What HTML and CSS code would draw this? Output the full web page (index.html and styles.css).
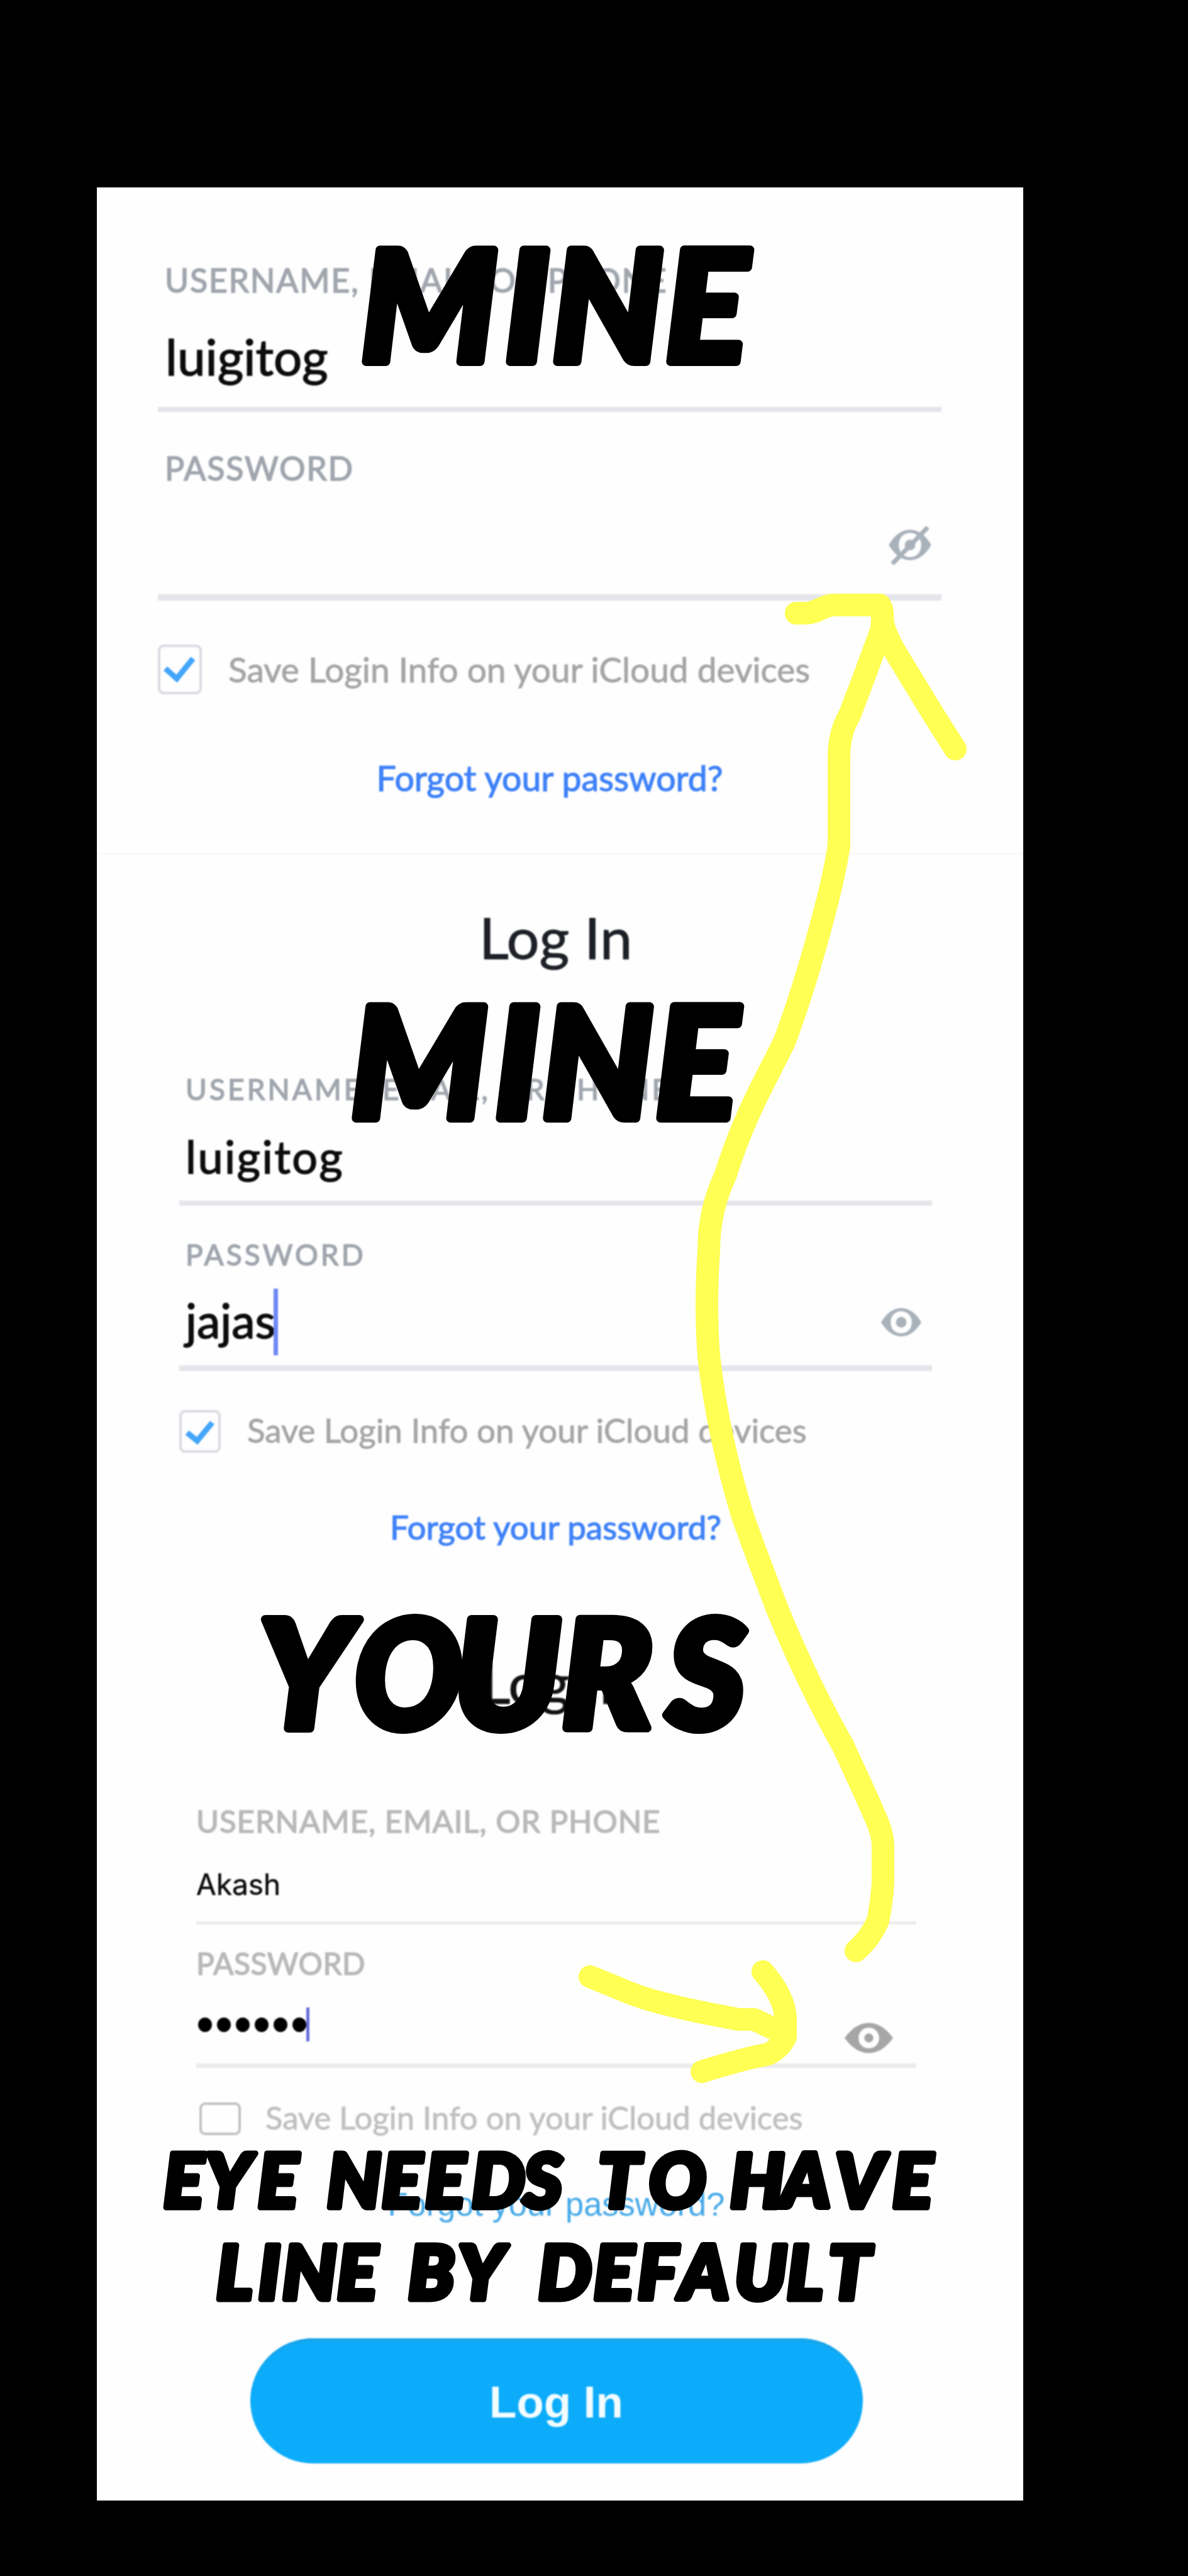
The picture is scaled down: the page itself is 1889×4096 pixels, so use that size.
FILE: index.html
```html
<!DOCTYPE html>
<html lang="en">
<head>
<meta charset="utf-8">
<title>Log In review</title>
<link rel="stylesheet" href="styles.css">
</head>
<body>
<main class="board">
  <div class="card">
    <section class="form form-hidden">
      <div class="field field-user">
        <div class="label">USERNAME, EMAIL, OR PHONE</div>
        <div class="value">luigitog</div>
      </div>
      <div class="field field-pass">
        <div class="label">PASSWORD</div>
        <div class="value value-empty">
          <svg class="eye" viewBox="0 0 85 78"><path fill-rule="evenodd" d="M0 38.500Q18 8 42.500 8T85 38.500Q67 69 42.500 69T0 38.500ZM42.500 14C29 14 20 25 20 38.500S29 63 42.500 63 65 52 65 38.500 56 14 42.500 14Z"/><circle cx="42.500" cy="38.500" r="10.500"/><path class="slash" d="M7 76 78 3"/></svg>
        </div>
      </div>
      <div class="save">
        <span class="box"><svg viewBox="0 0 70 79"><path d="M12 38 30 54 56 22"/></svg></span>
        <span class="save-text">Save Login Info on your iCloud devices</span>
      </div>
      <a class="forgot">Forgot your password?</a>
    </section>

    <section class="form form-visible">
      <h1 class="title">Log In</h1>
      <div class="field field-user">
        <div class="label">USERNAME, EMAIL, OR PHONE</div>
        <div class="value">luigitog</div>
      </div>
      <div class="field field-pass">
        <div class="label">PASSWORD</div>
        <div class="value"><span class="typed">jajas</span><i class="caret"></i>
          <svg class="eye" viewBox="0 0 80 56"><path fill-rule="evenodd" d="M0 28Q17 0 40 0T80 28Q63 56 40 56T0 28ZM40 6C27 6 19 16 19 28S27 50 40 50 61 40 61 28 53 6 40 6Z"/><circle cx="40" cy="28" r="10.500"/></svg>
        </div>
      </div>
      <div class="save">
        <span class="box"><svg viewBox="0 0 65 68"><path d="M12 36 28 49 52 20"/></svg></span>
        <span class="save-text">Save Login Info on your iCloud devices</span>
      </div>
      <a class="forgot">Forgot your password?</a>
    </section>

    <section class="form form-draft">
      <h1 class="title">Log In</h1>
      <div class="field field-user">
        <div class="label">USERNAME, EMAIL, OR PHONE</div>
        <div class="value">Akash</div>
      </div>
      <div class="field field-pass">
        <div class="label">PASSWORD</div>
        <div class="value">
          <span class="dots"><b></b><b></b><b></b><b></b><b></b><b></b></span><i class="caret"></i>
          <svg class="eye" viewBox="0 0 80 50"><path fill-rule="evenodd" d="M0 25Q18 0 40 0T80 25Q62 50 40 50T0 25ZM40 8C29 8 23 16 23 25S29 42 40 42 57 34 57 25 51 8 40 8Z"/><circle cx="40" cy="25" r="7.500"/></svg>
        </div>
      </div>
      <div class="save">
        <span class="box"></span>
        <span class="save-text">Save Login Info on your iCloud devices</span>
      </div>
      <a class="forgot">Forgot your password?</a>
      <div class="button">Log In</div>
    </section>
  </div>

  <svg class="notes" viewBox="0 0 1889 4096">
    <g class="arrow">
      <path d="M1266 975H1281C1300 975 1308 962 1327 962H1399"/>
      <path d="M1402 968 1404 992Q1410 1015 1428 1044L1484 1136 1519 1191"/>
      <path d="M1403 975Q1403 998 1400 1006L1370 1087 1351 1137Q1334 1165 1334 1205V1346Q1325 1400 1308 1462 1278 1575 1247 1657L1208 1734Q1175 1800 1153 1870 1127 1925 1127 1989 1121 2078 1127 2156 1140 2275 1180 2408 1200 2465 1237 2561 1285 2678 1340 2775 1375 2850 1390 2885 1404 2915 1404 2935V2996Q1401 3030 1396 3054 1384 3082 1361 3102"/>
      <path d="M938 3143 980 3160Q1010 3174 1056 3186T1175 3211H1199L1237 3229"/>
      <path d="M1213 3135Q1248 3175 1249 3210V3239Q1240 3257 1222 3266 1180 3274 1116 3294"/>
    </g>
    <g class="marker marker-xl">
      <text y="575" x="574 803 878 1058">MINE</text>
      <text y="1778" x="558 787 862 1042">MINE</text>
      <g class="marker-wide">
        <text y="2748" x="411">Y</text>
        <text y="2748" x="564" textLength="170" lengthAdjust="spacingAndGlyphs">O</text>
        <text y="2748" x="722" textLength="168" lengthAdjust="spacingAndGlyphs">U</text>
        <text y="2748" x="893 1061">RS</text>
      </g>
    </g>
    <g class="marker marker-md">
      <text y="3510" x="260 326 410">EYE</text>
      <text y="3510" x="520 607 676 750 832">NEEDS</text>
      <text y="3510" x="951 1032">TO</text>
      <text y="3510" x="1161 1242 1328 1419">HAVE</text>
      <text y="3656" x="344 411 449 536">LINE</text>
      <text y="3656" x="649 728">BY</text>
      <text y="3656" x="856 944 1014 1081 1168 1251 1317">DEFAULT</text>
    </g>
  </svg>
</main>
</body>
</html>
```
FILE: styles.css
```css
* { box-sizing: border-box; }

body {
  margin: 0;
  background: #000;
  font-family: Lato, "Open Sans", sans-serif;
}

.board {
  position: relative;
  width: 1889px;
  height: 4096px;
  overflow: hidden;
  padding: 298px 262px 0 154px;
  background: #000;
}

.card {
  height: 3678px;
  background: #fefefe;
}

/* Shared form pieces */
.form {
  display: flex;
  flex-direction: column;
}

.form > * { filter: blur(1.2px); }

.title {
  margin: 0;
  line-height: 1;
  font-weight: 400;
  text-align: center;
  color: #1d2026;
  -webkit-text-stroke: 1px;
}

.field {
  display: flex;
  flex-direction: column;
  border-bottom: 8px solid #e4e5ea;
}

.label {
  line-height: 1;
  color: #a1a6ae;
  white-space: nowrap;
  -webkit-text-stroke: 1.500px;
}

.value {
  display: flex;
  align-items: center;
  line-height: 1;
  color: #0c0c0e;
  -webkit-text-stroke: 1.500px;
}

.eye {
  flex: none;
  margin-left: auto;
  fill: #a9b1bb;
  overflow: visible;
}

.slash {
  fill: none;
  stroke: #a9b1bb;
  stroke-width: 9;
}

.caret {
  flex: none;
  width: 7px;
  background: #6f88f5;
}

.save {
  display: flex;
  align-items: center;
}

.box {
  flex: none;
  border: 4px solid #d9dbe1;
  border-radius: 9px;
}

.box svg {
  display: block;
  margin: -4px;
  fill: none;
  stroke: #43a5fb;
  stroke-width: 9;
}

.save-text {
  line-height: 1;
  color: #a5a5a5;
  white-space: nowrap;
  -webkit-text-stroke: 0.800px;
}

.forgot {
  line-height: 1;
  text-align: center;
  color: #3e81f8;
  -webkit-text-stroke: 1.200px;
}

/* Password hidden, large */
.form-hidden {
  height: 1059px;
  padding: 121px 130px 0 97px;
}
.form-hidden .label { padding-left: 11px; font-size: 52px; letter-spacing: 1.700px; }
.form-hidden .value { margin: 55px 0 41px; padding-left: 12px; font-size: 80px; }
.form-hidden .field-pass { margin-top: 63px; border-bottom-width: 10px; }
.form-hidden .value-empty { height: 175px; margin: 0; padding: 0 16px 0 0; }
.form-hidden .eye { width: 68px; height: 62px; margin-top: 18px; }
.form-hidden .save { margin-top: 70px; height: 79px; gap: 42px; font-size: 55px; }
.form-hidden .box { width: 70px; height: 79px; }
.form-hidden .box svg { width: 70px; height: 79px; }
.form-hidden .forgot { margin-top: 105px; font-size: 55.400px; }

/* Password visible */
.form-visible {
  height: 1095px;
  padding: 86px 145px 0 131px;
  border-top: 1px solid #f4f4f4;
}
.form-visible .title { font-size: 92px; }
.form-visible .label { padding-left: 10px; font-size: 46px; letter-spacing: 4.100px; }
.form-visible .field-user { margin-top: 173px; }
.form-visible .value { margin: 47px 0 35px; padding-left: 10px; font-size: 72px; letter-spacing: 2.400px; }
.form-visible .field-pass { margin-top: 55px; border-bottom-width: 9px; }
.form-visible .field-pass .value { height: 106px; margin: 31px 0 16px; padding-right: 17px; font-size: 75px; letter-spacing: 0; }
.typed { padding-bottom: 5px; }
.form-visible .caret { height: 106px; margin-left: -3px; }
.form-visible .eye { width: 64px; height: 45px; }
.form-visible .save { margin-top: 62px; height: 68px; gap: 42px; font-size: 52.900px; }
.form-visible .save-text { padding-bottom: 3px; }
.form-visible .box { width: 66px; height: 68px; }
.form-visible .box svg { width: 66px; height: 68px; }
.form-visible .forgot { margin-top: 91px; font-size: 53px; }

/* Draft build */
.form-draft { padding: 177px 170px 0 158px; }
.form-draft .title { font-size: 90px; color: #111; }
.form-draft .label { font-size: 49px; letter-spacing: 1px; color: #b9b9b9; }
.form-draft .field { border-bottom: 5px solid #ececec; }
.form-draft .field-user { margin-top: 152px; }
.form-draft .value { margin: 53px 0 36px; font-family: Inter, sans-serif; font-size: 46px; -webkit-text-stroke: 0.500px; }
.form-draft .field-pass { margin-top: 38px; border-bottom-width: 7px; }
.form-draft .field-pass .label { font-size: 48px; letter-spacing: 0.500px; }
.form-draft .field-pass .value { height: 54px; margin: 46px 0 35px; padding-right: 37px; }
.dots { display: flex; gap: 8px; padding-left: 3px; }
.dots b { width: 22px; height: 23px; border-radius: 50%; background: #000; }
.form-draft .dots + .caret { width: 5px; height: 54px; margin-left: 0; background: #686ddd; }
.form-draft .eye { width: 77px; height: 49px; margin-top: 42px; fill: #a6a6a6; }
.form-draft .save { margin: 55px 0 0 5px; height: 52px; gap: 39px; font-size: 50.800px; }
.form-draft .save-text { padding-bottom: 3px; color: #c0c0c0; }
.form-draft .box { width: 66px; height: 52px; border-color: #c2c2c2; }
.form-draft .forgot { margin-top: 84px; font-family: "Liberation Sans", sans-serif; font-size: 52.400px; color: #45a9e8; -webkit-text-stroke: 0; }

.button {
  align-self: center;
  display: flex;
  align-items: center;
  justify-content: center;
  width: 974px;
  height: 199px;
  margin-top: 187px;
  padding-top: 3px;
  border-radius: 100px;
  background: #0dacfa;
  box-shadow: inset 0 7px 3px -2px #19a5e9;
  font-family: "Liberation Sans", sans-serif;
  font-size: 71px;
  font-weight: 700;
  color: #f2fcff;
}

/* Hand-drawn notes above the card */
.notes {
  position: absolute;
  inset: 0;
  width: 1889px;
  height: 4096px;
}

.arrow {
  fill: none;
  stroke: #ffff54;
  stroke-width: 36;
  stroke-linecap: round;
  stroke-linejoin: round;
}

.marker {
  font-weight: 900;
  font-style: italic;
  fill: #000;
  stroke: #000;
  stroke-linejoin: round;
}

.marker-xl { font-size: 244px; stroke-width: 14px; }
.marker-wide { font-size: 238px; }
.marker-md { font-size: 119px; stroke-width: 9px; }
```
